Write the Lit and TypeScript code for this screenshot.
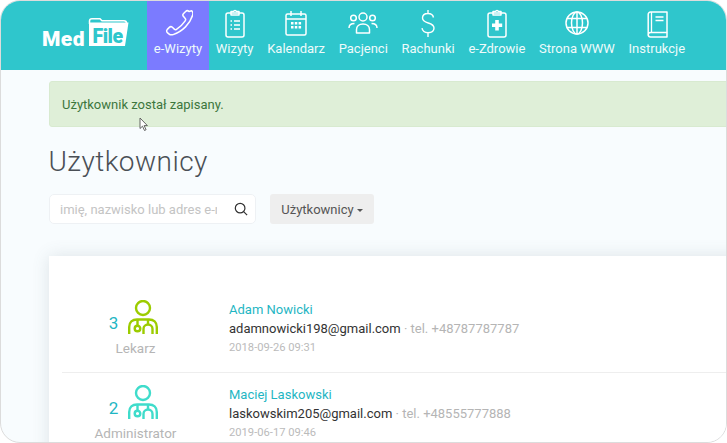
import { LitElement, html, css, svg } from "lit";
import { customElement } from "lit/decorators.js";

const icons: Record<string, any> = {
  phone: svg`<path d="M26 3.500c-1-1-2.400-1-3.400 0l-2 2c-.9.9-.9 2.200 0 3.100l1.600 1.800c.6.7.6 1.600 0 2.400-2.300 3.400-5.200 6.200-8.700 8.500-.7.5-1.600.4-2.200-.2l-1.900-1.800c-.9-.8-2.200-.8-3.100.1l-2 2c-.9 1-.9 2.400.1 3.300l1.400 1.100c1.200 1 2.800 1.300 4.300.8 4.700-1.500 8.900-4.200 12.400-7.700 3.300-3.400 5.800-7.400 7.200-11.900.5-1.500.1-3.100-1-4.200z"/>`,
  clip: svg`<rect x="6" y="5" width="18" height="24" rx="2"/><path d="M11 5V3.500h2.500a1.600 1.600 0 0 1 3 0H19V7h-8z"/><path d="M10.500 13h1.500M14 13h6M10.500 17h1.500M14 17h6M10.500 21h1.500M14 21h6" stroke-width="1.600"/>`,
  cal: svg`<rect x="5" y="6" width="20" height="21" rx="1.500"/><path d="M5 11h20M10 3v5M20 3v5"/><path d="M10 14h2.500v2.500H10zM13.800 14h2.500v2.500h-2.500zM17.600 14h2.500v2.500h-2.500zM10 18h2.500v2.500H10zM13.800 18h2.500v2.500h-2.500zM17.600 18h2.500v2.500h-2.500z" fill="#fff" stroke="none"/>`,
  people: svg`<circle cx="15" cy="9" r="4"/><circle cx="5.500" cy="10" r="2.800"/><circle cx="24.500" cy="10" r="2.800"/><path d="M8.500 25v-3.500c0-3 2.500-5.500 6.500-5.500s6.500 2.500 6.500 5.500V25z"/><path d="M1 20c0-3 2-4.500 5.500-4.500M29 20c0-3-2-4.500-5.500-4.500"/>`,
  dollar: svg`<path d="M20.500 9.500c-.5-2.500-2.600-4-5.500-4-3.300 0-5.500 1.700-5.500 4.500 0 6.500 11.500 3.500 11.500 10 0 3-2.500 4.700-6 4.700-3.300 0-5.500-1.700-6-4.500M15 2v3.500M15 24.700V29" stroke-width="1.400"/>`,
  med: svg`<rect x="6" y="5" width="18" height="24" rx="2"/><path d="M11 5V3.500h2.500a1.600 1.600 0 0 1 3 0H19V7h-8z"/><path d="M13.200 12h3.600v3.500h3.400v3.400h-3.400v3.500h-3.600v-3.500H10v-3.400h3.200z" fill="#fff" stroke="none"/>`,
  globe: svg`<circle cx="15" cy="15" r="11"/><ellipse cx="15" cy="15" rx="5.500" ry="11"/><path d="M5 10.500h20M5 19.500h20M15 4v22"/>`,
  book: svg`<path d="M8.500 4H25v20.500H8.500a2.300 2.300 0 0 0-2.300 2.300V6.300A2.300 2.300 0 0 1 8.500 4z"/><path d="M6.200 26.800A2.300 2.300 0 0 0 8.500 29H25v-4.500"/><path d="M9.500 4v20.500M13.500 9h8M13.500 12.500h8" stroke-width="1.300"/>`,
};

const nav = [
  ["phone", "e-Wizyty"], ["clip", "Wizyty"], ["cal", "Kalendarz"], ["people", "Pacjenci"],
  ["dollar", "Rachunki"], ["med", "e-Zdrowie"], ["globe", "Strona WWW"], ["book", "Instrukcje"],
];

const users = [
  { n: 3, role: "Lekarz", color: "#9ccc00", name: "Adam Nowicki", mail: "adamnowicki198@gmail.com", tel: "tel. +48787787787", date: "2018-09-26 09:31" },
  { n: 2, role: "Administrator", color: "#3fdccb", name: "Maciej Laskowski", mail: "laskowskim205@gmail.com", tel: "tel. +48555777888", date: "2019-06-17 09:46" },
];

@customElement("app-root")
export class AppRoot extends LitElement {
  static styles = css`
    :host { display: block; width: 727px; height: 443px; background: #fff; font-family: Roboto, sans-serif; }
    .frame { position: relative; box-sizing: border-box; width: 727px; height: 443px; overflow: hidden; border: 1px solid #dcdcdc; border-radius: 20px; background: #f8fcfe; }
    header { display: flex; height: 69px; background: #2fc6cc; }
    .logo { width: 146px; flex: none; display: flex; align-items: center; }
    .med { margin: 7px 0 0 41px; width: 46px; flex: none; font: 900 21px/1 Roboto, sans-serif; color: #fff; letter-spacing: .4px; }
    .folder { position: relative; margin-top: -7px; width: 41px; height: 28px; flex: none; }
    .folder svg { display: block; }
    .filetxt { position: absolute; left: 4.500px; top: 8.500px; font: 900 19.500px/1 Roboto, sans-serif; color: #2fc6cc; letter-spacing: -.5px; }
    nav { display: flex; }
    .item { display: flex; flex-direction: column; align-items: center; padding: 7px 6.870px 0; color: #eefbfb; font-size: 13px; line-height: 15px; white-space: nowrap; }
    .item.on { background: #7b7bff; }
    .item svg { width: 30px; height: 30px; fill: none; stroke: #fff; stroke-width: 1.500; margin-bottom: 3px; stroke-linejoin: round; display: block; }
    main { padding: 11px 0 0 48px; }
    .alert { box-sizing: border-box; height: 46px; width: 700px; padding: 0 12px; display: flex; align-items: center; background: #dfefd8; border: 1px solid #d8ead0; border-radius: 3px; color: #3c763d; font-size: 13px; }
    h1 { margin: 18px 0 0 -.5px; font-size: 28px; font-weight: 300; line-height: 34px; color: #4a4f55; letter-spacing: .45px; }
    .tools { display: flex; gap: 14px; margin-top: 15px; }
    .search { box-sizing: border-box; width: 207px; height: 30px; display: flex; align-items: center; justify-content: space-between; padding: 0 7px 0 10px; background: #fff; border: 1px solid #eef1f4; border-radius: 5px; }
    .ph { width: 157px; overflow: hidden; white-space: nowrap; color: #c4c4c4; font-size: 13px; }
    .search svg { width: 14px; height: 14px; fill: none; stroke: #333; stroke-width: 1.400; }
    .btn { box-sizing: border-box; width: 104px; height: 30px; display: flex; align-items: center; justify-content: center; gap: 3px; background: #eee; border-radius: 3px; color: #555; font-size: 13px; }
    .caret { width: 0; height: 0; border: 3px solid transparent; border-top-color: #555; border-bottom-width: 0; margin-top: 2px; }
    .card { margin-top: 32px; height: 240px; width: 700px; box-sizing: border-box; background: #fff; padding: 25px 0 0 13px; box-shadow: 0 0 16px rgba(80,100,110,.16); }
    .row { display: flex; height: 92px; box-sizing: border-box; padding-top: 18px; }
    .row + .row { height: 78px; padding-top: 11px; }
    .row.sep { border-bottom: 1px solid #eee; }
    .who { width: 167px; flex: none; display: flex; flex-direction: column; align-items: center; padding-right: 20px; box-sizing: border-box; }
    .top { display: flex; align-items: flex-end; gap: 10px; height: 35px; margin-left: -4px; }
    .num { color: #1fb6c3; font-size: 17px; line-height: 1; padding-bottom: 2px; }
    .top svg { width: 30px; height: 34px; fill: none; stroke-width: 2.400; display: block; }
    .role { color: #b5b5b5; font-size: 13.500px; margin-top: 6px; line-height: 16px; white-space: nowrap; }
    .info { font-size: 13px; line-height: 18.500px; white-space: nowrap; margin-top: 2px; }
    .name { color: #1fb6c3; }
    .mail { color: #333; }
    .tel { color: #b5b5b5; }
    .date { color: #bbb; font-size: 11.200px; line-height: 20px; }
    .cursor { position: absolute; left: 137.500px; top: 116px; width: 11px; height: 15px; }
  `;

  render() {
    return html`<div class="frame">
      <header>
        <div class="logo">
          <span class="med">Med</span>
          <div class="folder">
            <svg width="41" height="28" viewBox="0 0 41 28">
              <path d="M1.500 6V3C1.500 1.500 2.500.8 4 .8h8l2 2H36c1.500 0 2.500 1 2.500 2.500" fill="none" stroke="#fff" stroke-width="1.500"/>
              <path d="M1 4.500H40.500L37 28H1z" fill="#fff"/>
            </svg>
            <span class="filetxt">File</span>
          </div>
        </div>
        <nav>
          ${nav.map(([i, t], k) => html`<div class="item ${k === 0 ? "on" : ""}"><svg viewBox="0 0 30 30">${icons[i]}</svg>${t}</div>`)}
        </nav>
      </header>
      <main>
        <div class="alert">Użytkownik został zapisany.</div>
        <h1>Użytkownicy</h1>
        <div class="tools">
          <div class="search"><span class="ph">imię, nazwisko lub adres e-mail</span>
            <svg viewBox="0 0 16 16"><circle cx="7" cy="7" r="5.500"/><path d="M11 11l4 4"/></svg></div>
          <div class="btn">Użytkownicy <span class="caret"></span></div>
        </div>
        <div class="card">
          ${users.map((u, k) => html`<div class="row ${k === 0 ? "sep" : ""}">
            <div class="who">
              <div class="top"><span class="num">${u.n}</span>
                <svg viewBox="0 0 30 34" style="stroke:${u.color}">
                  <circle cx="15" cy="8" r="7"/>
                  <path d="M1.200 34V27C1.200 22 4.500 19.500 9 19.500H21C25.500 19.500 28.800 22 28.800 27V34"/>
                  <path d="M9.500 19.500V25.500M20 19.500V24"/><circle cx="9.500" cy="28.500" r="2.800"/>
                  <path d="M15.500 34V29a4.500 4.500 0 0 1 9 0V34"/>
                </svg></div>
              <div class="role">${u.role}</div>
            </div>
            <div class="info">
              <div class="name">${u.name}</div>
              <div><span class="mail">${u.mail}</span><span class="tel"> · ${u.tel}</span></div>
              <div class="date">${u.date}</div>
            </div>
          </div>`)}
        </div>
      </main>
      <svg class="cursor" viewBox="0 0 11 15"><path d="M1 1v10.500l2.500-2.300 2 4.300 1.600-.8-2-4.100h3.300z" fill="#fff" stroke="#555" stroke-width=".9"/></svg>
    </div>`;
  }
}
